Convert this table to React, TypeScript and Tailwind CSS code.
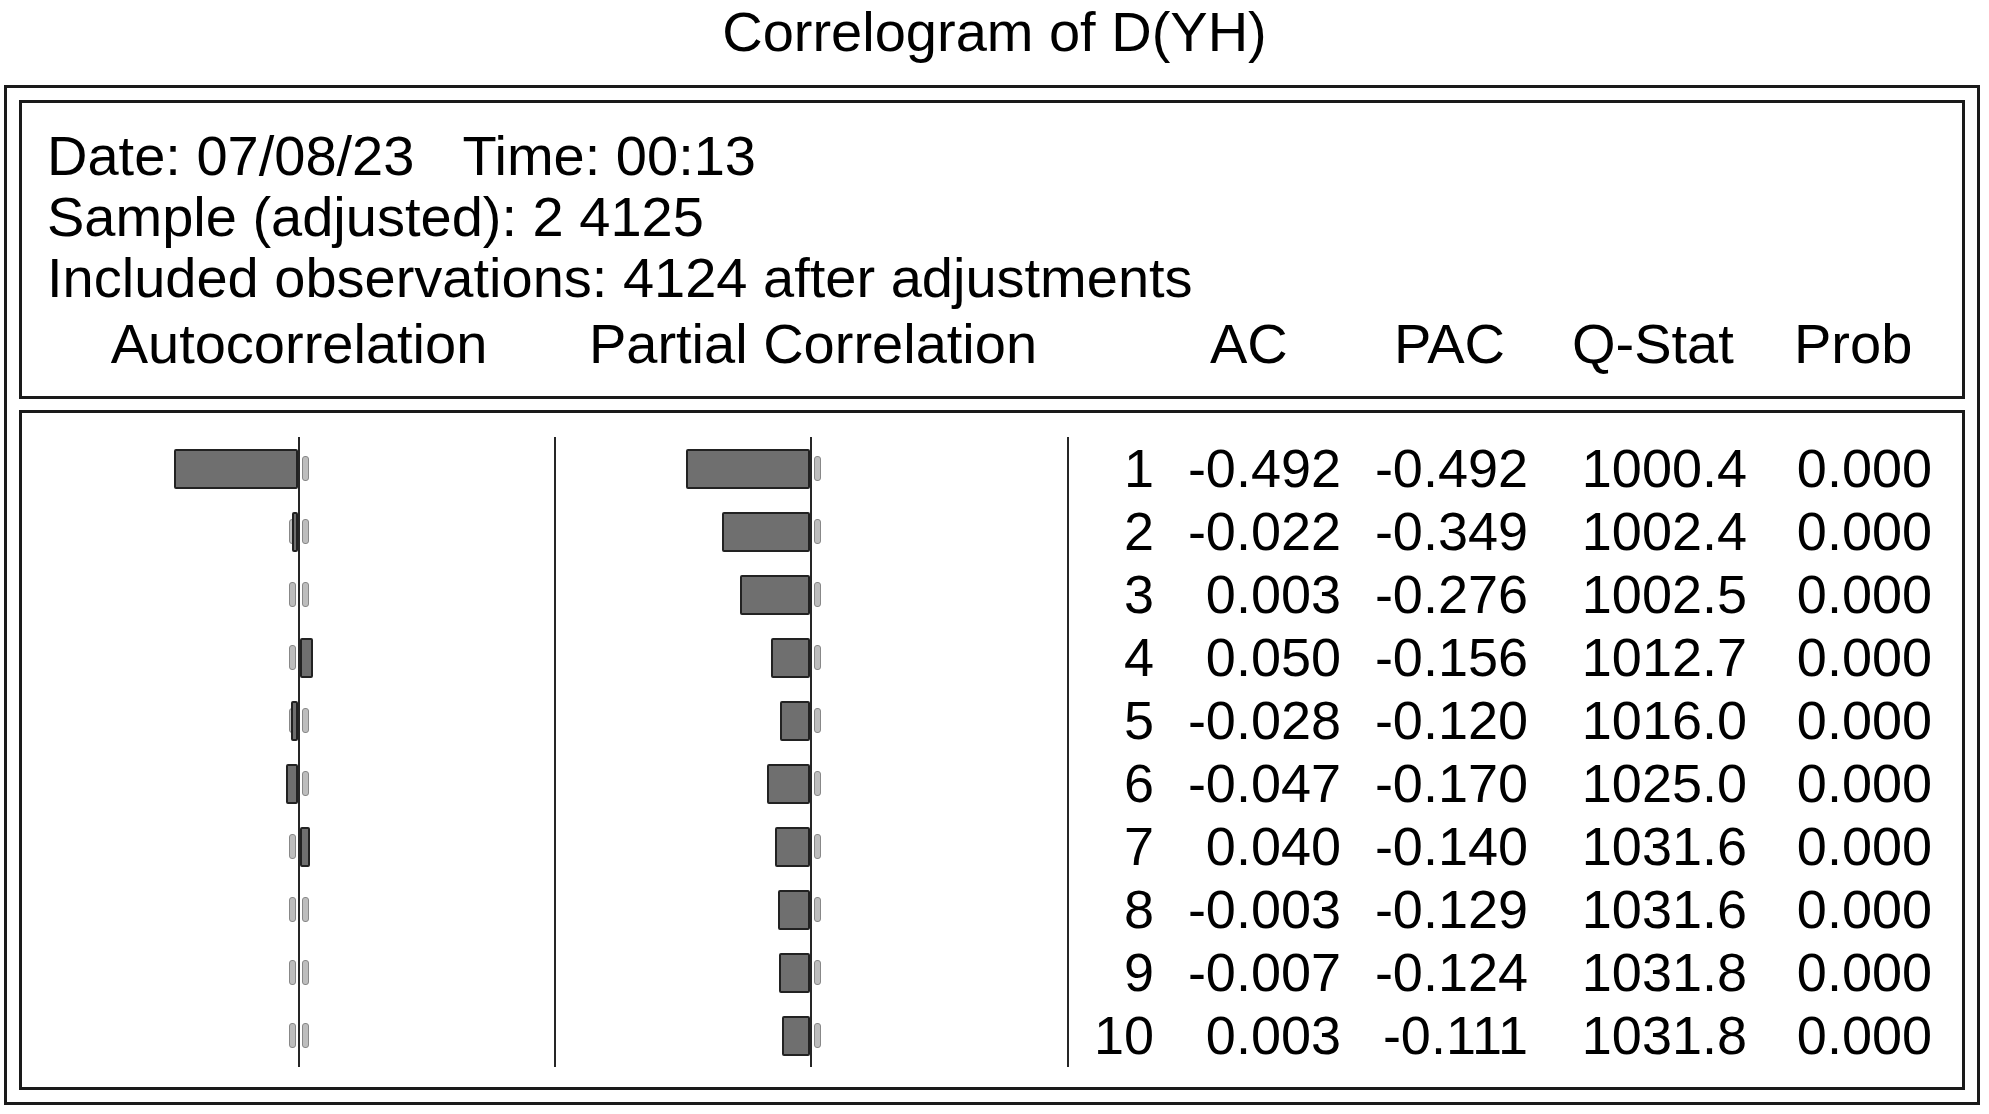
const font = { fontFamily: '"Liberation Sans", Arial, sans-serif' }

type Row = { lag: number; ac: number; pac: number; q: string }

const rows: Row[] = [
  { lag: 1, ac: -0.492, pac: -0.492, q: '1000.4' },
  { lag: 2, ac: -0.022, pac: -0.349, q: '1002.4' },
  { lag: 3, ac: 0.003, pac: -0.276, q: '1002.5' },
  { lag: 4, ac: 0.05, pac: -0.156, q: '1012.7' },
  { lag: 5, ac: -0.028, pac: -0.12, q: '1016.0' },
  { lag: 6, ac: -0.047, pac: -0.17, q: '1025.0' },
  { lag: 7, ac: 0.04, pac: -0.14, q: '1031.6' },
  { lag: 8, ac: -0.003, pac: -0.129, q: '1031.6' },
  { lag: 9, ac: -0.007, pac: -0.124, q: '1031.8' },
  { lag: 10, ac: 0.003, pac: -0.111, q: '1031.8' },
]

// pixels per unit of correlation
const SCALE = 252

const fmt = (v: number) => (v < 0 ? '-' : '') + Math.abs(v).toFixed(3)

function Side({ v, left }: { v: number; left: boolean }) {
  const w = Math.abs(v) * SCALE
  const show = w >= 3 && (left ? v < 0 : v > 0)
  return (
    <div className={`grid items-center h-full ${left ? 'justify-items-end' : 'justify-items-start'}`}>
      <div
        className={`col-start-1 row-start-1 h-[25px] w-[7px] rounded-[3px] bg-[#bdbdbd] border border-[#888888] ${left ? 'mr-[2px]' : 'ml-[2px]'}`}
      />
      {show && (
        <div
          className="col-start-1 row-start-1 h-[40px] bg-[#6f6f6f] border-2 border-[#222222] rounded-[2px]"
          style={{ width: Math.max(w, 6) }}
        />
      )}
    </div>
  )
}

function BarColumn({ values, leftWidth, className }: { values: number[]; leftWidth: string; className: string }) {
  return (
    <div className={`flex flex-col ${className}`}>
      {values.map((v, i) => (
        <div key={i} className="flex h-[63px]">
          <div className={`${leftWidth} h-full`}>
            <Side v={v} left />
          </div>
          <div className="w-[2px] h-full bg-[#262626]" />
          <div className="flex-1 h-full">
            <Side v={v} left={false} />
          </div>
        </div>
      ))}
    </div>
  )
}

export default function App() {
  return (
    <div className="w-[1989px] min-h-[1114px] bg-white text-black" style={font}>
      <div className="text-center text-[56px] leading-[63px]">Correlogram of D(YH)</div>

      <div className="mt-[22px] ml-[4px] w-[1976px] border-[3px] border-[#1a1a1a] p-[12px] flex flex-col gap-[11px]">
        {/* header box */}
        <div className="border-[3px] border-[#1a1a1a] pt-[22px] pb-[22px] pl-[25px] text-[56px] leading-[61px] whitespace-nowrap">
          <div>
            Date: 07/08/23<span className="ml-[48px]">Time: 00:13</span>
          </div>
          <div>Sample (adjusted): 2 4125</div>
          <div>Included observations: 4124 after adjustments</div>
          <div className="flex mt-[5px]">
            <div className="w-[504px] text-center">Autocorrelation</div>
            <div className="w-[524px] text-center">Partial Correlation</div>
            <div className="w-[319px] pl-[135px]">AC</div>
            <div className="w-[178px]">PAC</div>
            <div className="w-[222px]">Q-Stat</div>
            <div>Prob</div>
          </div>
        </div>

        {/* correlogram body */}
        <div className="border-[3px] border-[#1a1a1a] pt-[24px] pb-[20px]">
          <div className="flex">
            <BarColumn
              values={rows.map((r) => r.ac)}
              leftWidth="w-[276px]"
              className="w-[534px] border-r-2 border-[#262626]"
            />
            <BarColumn
              values={rows.map((r) => r.pac)}
              leftWidth="w-[254px]"
              className="w-[513px] border-r-2 border-[#262626]"
            />
            <div className="flex flex-col text-[54px] leading-[63px] whitespace-nowrap">
              {rows.map((r) => (
                <div key={r.lag} className="flex h-[63px]">
                  <div className="w-[85px] text-right">{r.lag}</div>
                  <div className="w-[187px] text-right">{fmt(r.ac)}</div>
                  <div className="w-[187px] text-right">{fmt(r.pac)}</div>
                  <div className="w-[219px] text-right">{r.q}</div>
                  <div className="w-[185px] text-right">0.000</div>
                </div>
              ))}
            </div>
          </div>
        </div>
      </div>
    </div>
  )
}
